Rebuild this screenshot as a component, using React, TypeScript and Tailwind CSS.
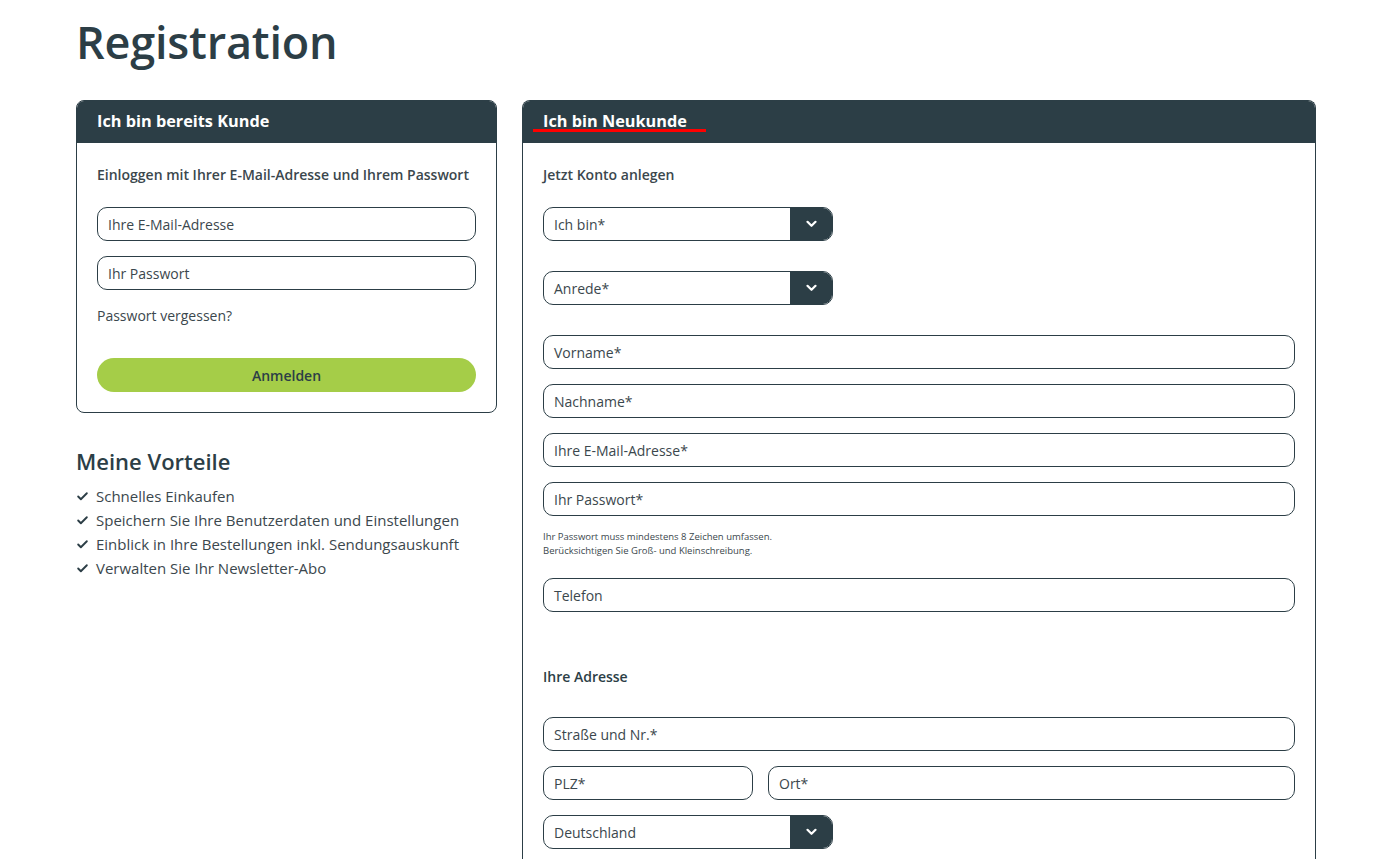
import { Check } from 'lucide-react'

const font = { fontFamily: '"Open Sans", "Noto Sans", sans-serif' }

function Chevron() {
  return (
    <svg width="11" height="8" viewBox="0 0 11 8" fill="none">
      <path d="M1.5 1.8 5.5 5.8l4-4" stroke="white" strokeWidth="2.2" strokeLinecap="round" strokeLinejoin="round" />
    </svg>
  )
}

function Field({ placeholder, className = '' }: { placeholder: string; className?: string }) {
  return (
    <div
      className={`h-[34px] flex items-center px-[10px] border border-[#2c3e46] rounded-[10px] text-[14px] text-[#3b474d] bg-white ${className}`}
    >
      {placeholder}
    </div>
  )
}

function Select({ label }: { label: string }) {
  return (
    <div className="w-[290px] h-[34px] flex border border-[#2c3e46] rounded-[10px] overflow-hidden bg-white">
      <div className="flex-1 flex items-center px-[10px] text-[14px] text-[#3b474d]">{label}</div>
      <div className="w-[42px] bg-[#2c3e46] flex items-center justify-center">
        <Chevron />
      </div>
    </div>
  )
}

export default function App() {
  return (
    <div className="min-h-screen bg-white text-[#2c3e46]" style={font}>
      <div className="w-[1240px] mx-auto">
        <h1 className="text-[45px] font-semibold leading-none pt-[19px] tracking-[-0.2px]">Registration</h1>

        <div className="flex gap-[25px] items-start mt-[36px]">
          {/* Existing customers */}
          <div className="w-[421px] flex flex-col">
            <div className="rounded-[8px] border border-[#2c3e46] overflow-hidden">
              <div className="h-[42px] pb-[2px] bg-[#2c3e46] flex items-center px-[20px] text-white text-[16.3px] font-bold">
                Ich bin bereits Kunde
              </div>
              <div className="px-[20px] pt-[22px] pb-[20px]">
                <p className="text-[14px] font-semibold text-[#3b474d] leading-[20px]">
                  Einloggen mit Ihrer E-Mail-Adresse und Ihrem Passwort
                </p>
                <Field placeholder="Ihre E-Mail-Adresse" className="mt-[22px]" />
                <Field placeholder="Ihr Passwort" className="mt-[15px]" />
                <p className="mt-[16px] text-[14px] text-[#3b474d] leading-[20px]">Passwort vergessen?</p>
                <button className="mt-[32px] w-full h-[34px] rounded-full bg-[#a5cd48] text-[14px] font-semibold text-[#2c3e46]">
                  Anmelden
                </button>
              </div>
            </div>

            <h2 className="mt-[34px] text-[22px] font-semibold leading-[28px]">Meine Vorteile</h2>
            <ul className="mt-[9px] text-[15px] text-[#3b474d]">
              {[
                'Schnelles Einkaufen',
                'Speichern Sie Ihre Benutzerdaten und Einstellungen',
                'Einblick in Ihre Bestellungen inkl. Sendungsauskunft',
                'Verwalten Sie Ihr Newsletter-Abo',
              ].map((item) => (
                <li key={item} className="flex items-center gap-[7px] h-[24px]">
                  <Check size={13} strokeWidth={3.5} className="text-[#2c3e46]" />
                  {item}
                </li>
              ))}
            </ul>
          </div>

          {/* New customers */}
          <div className="flex-1 rounded-t-[8px] border border-[#2c3e46] border-b-0 overflow-hidden min-h-[780px]">
            <div className="relative h-[42px] pb-[2px] bg-[#2c3e46] flex items-center px-[20px] text-white text-[16.3px] font-bold">
              Ich bin Neukunde
              <span className="absolute left-[10px] top-[28px] w-[173px] h-[3px] bg-[#ff0000]" />
            </div>
            <div className="px-[20px] pt-[22px] pb-[20px]">
              <p className="text-[14px] font-semibold text-[#3b474d] leading-[20px]">Jetzt Konto anlegen</p>
              <div className="mt-[22px]">
                <Select label="Ich bin*" />
              </div>
              <div className="mt-[30px]">
                <Select label="Anrede*" />
              </div>
              <Field placeholder="Vorname*" className="mt-[30px]" />
              <Field placeholder="Nachname*" className="mt-[15px]" />
              <Field placeholder="Ihre E-Mail-Adresse*" className="mt-[15px]" />
              <Field placeholder="Ihr Passwort*" className="mt-[15px]" />
              <p className="mt-[14px] text-[9.5px] leading-[14px] text-[#3b474d]">
                Ihr Passwort muss mindestens 8 Zeichen umfassen.
                <br />
                Berücksichtigen Sie Groß- und Kleinschreibung.
              </p>
              <Field placeholder="Telefon" className="mt-[20px]" />
              <p className="mt-[55px] text-[14px] font-semibold text-[#2c3e46] leading-[20px]">Ihre Adresse</p>
              <Field placeholder="Straße und Nr.*" className="mt-[30px]" />
              <div className="flex gap-[15px] mt-[15px]">
                <Field placeholder="PLZ*" className="w-[210px]" />
                <Field placeholder="Ort*" className="flex-1" />
              </div>
              <div className="mt-[15px]">
                <Select label="Deutschland" />
              </div>
            </div>
          </div>
        </div>
      </div>
    </div>
  )
}
